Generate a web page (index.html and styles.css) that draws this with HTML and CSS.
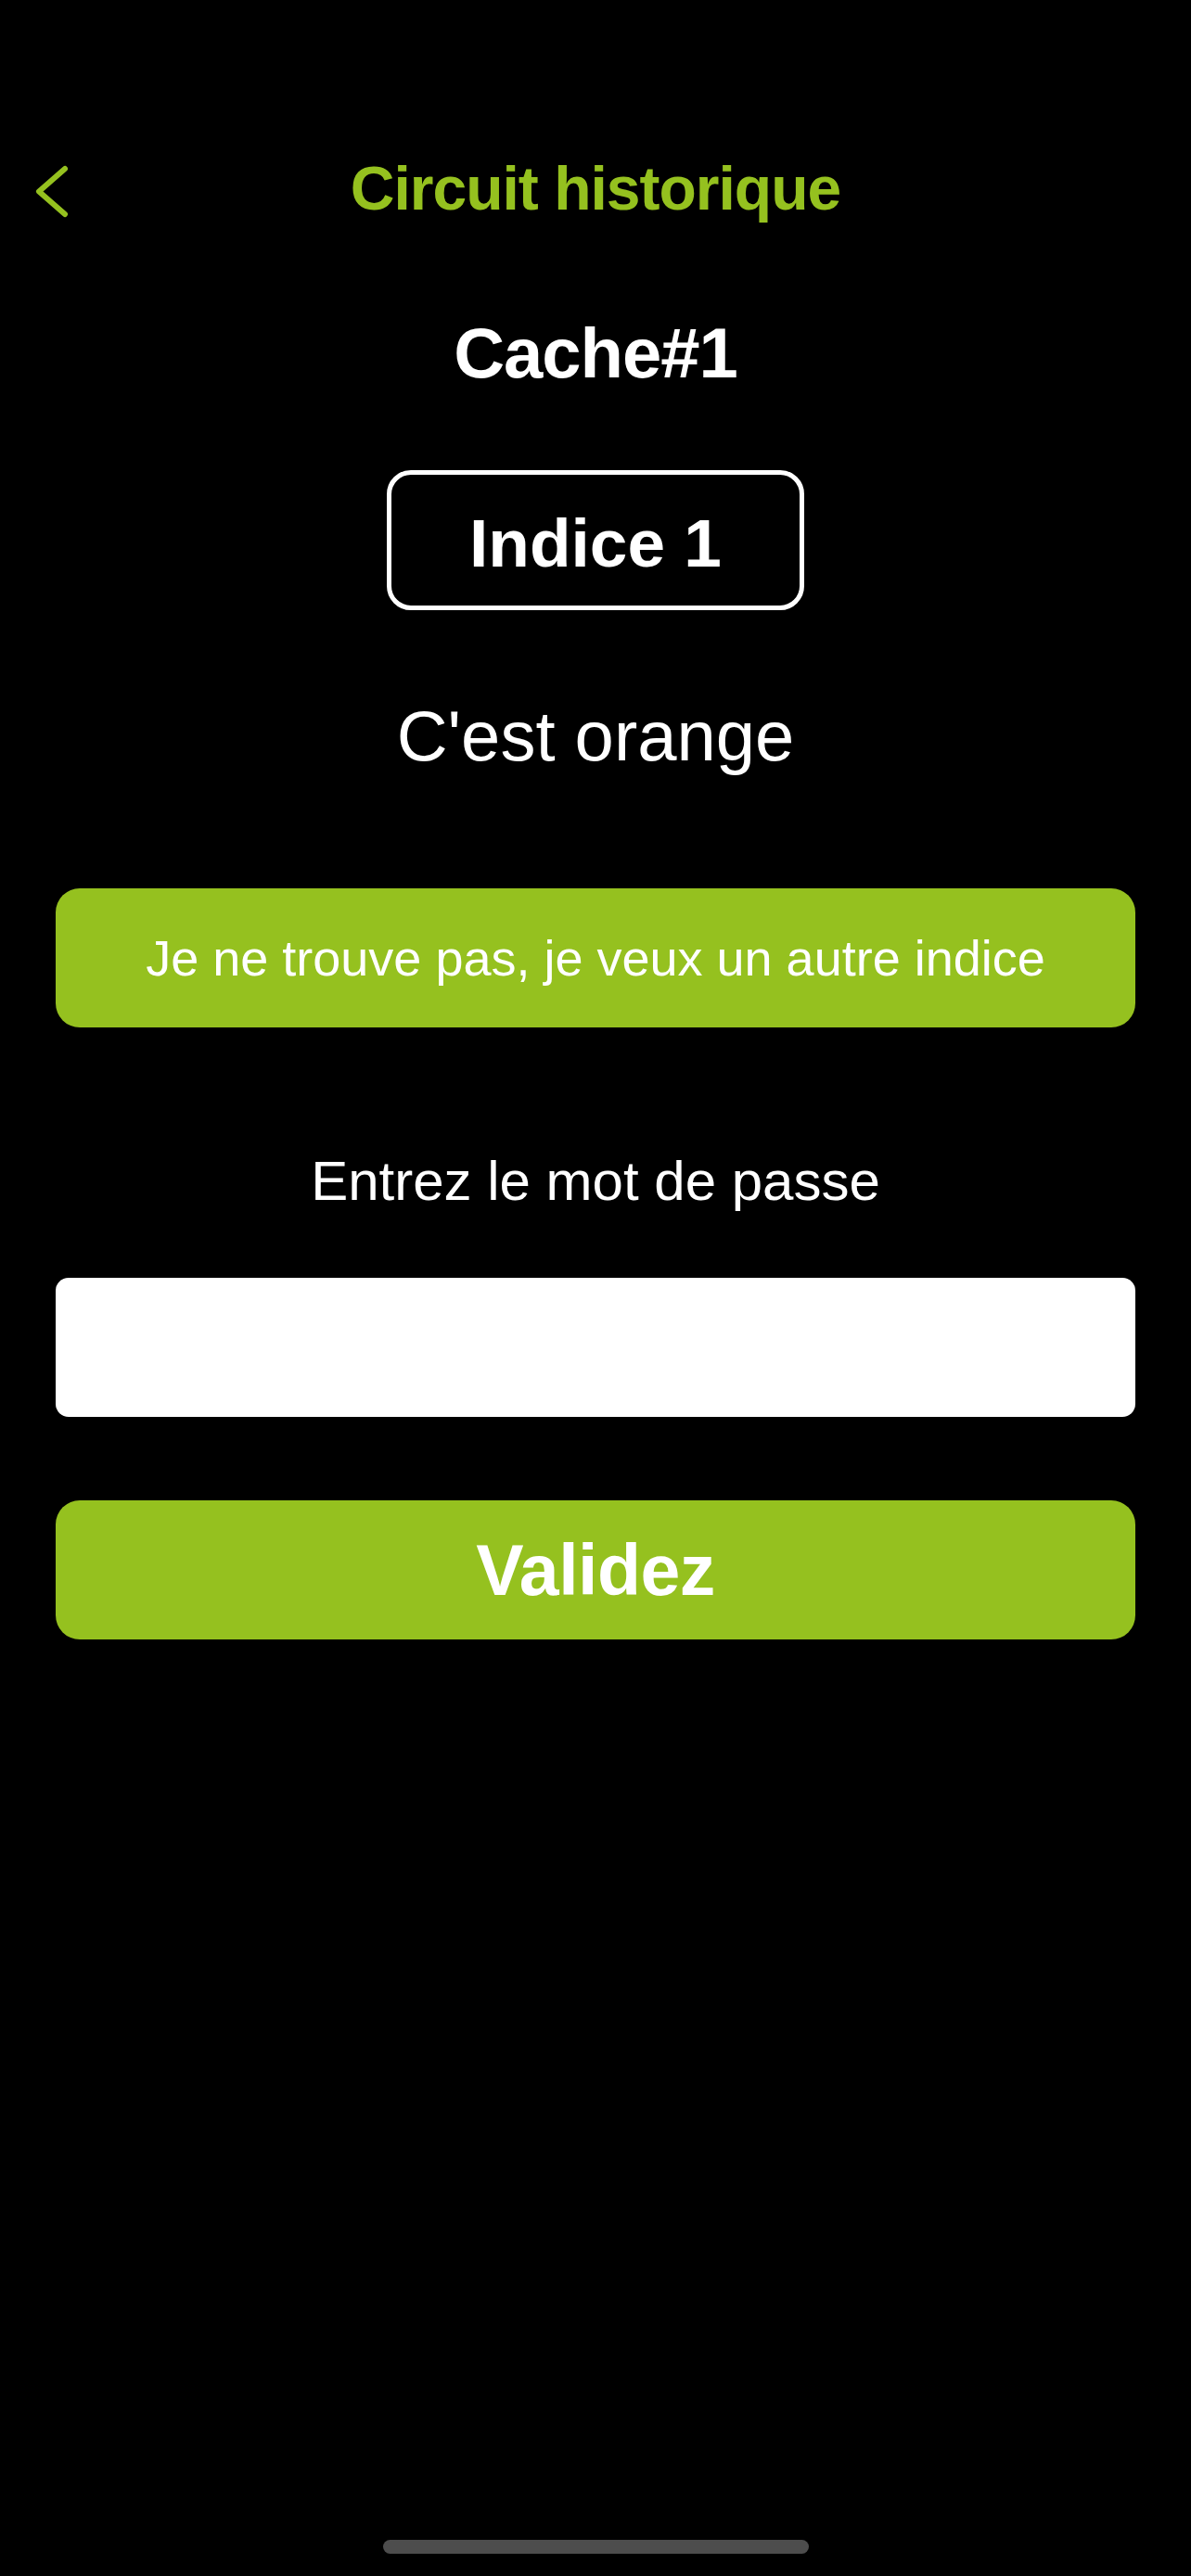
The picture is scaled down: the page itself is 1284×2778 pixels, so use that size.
FILE: index.html
```html
<!DOCTYPE html>
<html lang="fr">
<head>
  <meta charset="UTF-8">
  <meta name="viewport" content="width=device-width, initial-scale=1.0">
  <title>Circuit historique</title>
  <link rel="stylesheet" href="styles.css">
</head>
<body>
  <div class="screen">
    <header class="nav">
      <a class="back" href="#" aria-label="Retour">
        <svg width="40" height="66" viewBox="0 0 40 66">
          <polyline points="34,12 6,36.5 34,61" fill="none" stroke="#95c11f" stroke-width="6" stroke-linecap="round" stroke-linejoin="round"/>
        </svg>
      </a>
      <h1 class="nav-title">Circuit historique</h1>
      <span></span>
    </header>

    <main class="content">
      <h2 class="cache-title">Cache#1</h2>
      <div class="hint-label">Indice 1</div>
      <p class="hint-text">C'est orange</p>
      <button class="btn btn-hint">Je ne trouve pas, je veux un autre indice</button>

      <label class="pw-label" for="pw">Entrez le mot de passe</label>
      <input id="pw" class="pw-input" type="password">
      <button class="btn btn-validate">Validez</button>
    </main>

    <div class="home-indicator"></div>
  </div>
</body>
</html>
```

FILE: styles.css
```css
body {
  margin: 0;
  padding: 0;
  background: #000;
  color: #fff;
  font-family: "Liberation Sans", Arial, Helvetica, sans-serif;
}

.screen {
  min-height: 2778px;
  display: flex;
  flex-direction: column;
}

/* Top navigation */
.nav {
  display: grid;
  grid-template-columns: 1fr auto 1fr;
  align-items: center;
  margin-top: 170px;
  height: 66px;
}

.back {
  display: flex;
  align-items: center;
  padding-left: 36px;
}

.nav-title {
  margin: 0;
  font-size: 66px;
  line-height: 1;
  font-weight: bold;
  letter-spacing: -1px;
  color: #95c11f;
}

/* Main content */
.content {
  display: flex;
  flex-direction: column;
  align-items: center;
  padding: 0 60px;
}

.cache-title {
  margin: 107px 0 0;
  font-size: 76px;
  line-height: 1;
  font-weight: bold;
  letter-spacing: -1px;
}

.hint-label {
  margin-top: 88px;
  width: 450px;
  box-sizing: border-box;
  padding: 37px 0 31px;
  border: 5px solid #fff;
  border-radius: 26px;
  text-align: center;
  font-size: 73px;
  line-height: 1;
  font-weight: bold;
}

.hint-text {
  margin: 98px 0 0;
  font-size: 76px;
  line-height: 1;
}

.btn {
  width: 100%;
  height: 150px;
  border: none;
  border-radius: 26px;
  background: #95c11f;
  color: #fff;
  font-family: inherit;
  line-height: 1;
  cursor: pointer;
}

.btn-hint {
  margin-top: 126px;
  font-size: 54px;
}

.pw-label {
  margin-top: 136px;
  font-size: 60px;
  line-height: 1;
}

.pw-input {
  margin-top: 74px;
  width: 100%;
  height: 150px;
  box-sizing: border-box;
  border: none;
  border-radius: 14px;
  background: #fff;
  padding: 0 30px;
  font-size: 50px;
}

.btn-validate {
  margin-top: 90px;
  font-size: 77px;
  font-weight: bold;
  letter-spacing: -0.5px;
}

/* iOS home indicator */
.home-indicator {
  margin: auto auto 24px;
  width: 459px;
  height: 15px;
  border-radius: 8px;
  background: #4d4d4d;
}
```
